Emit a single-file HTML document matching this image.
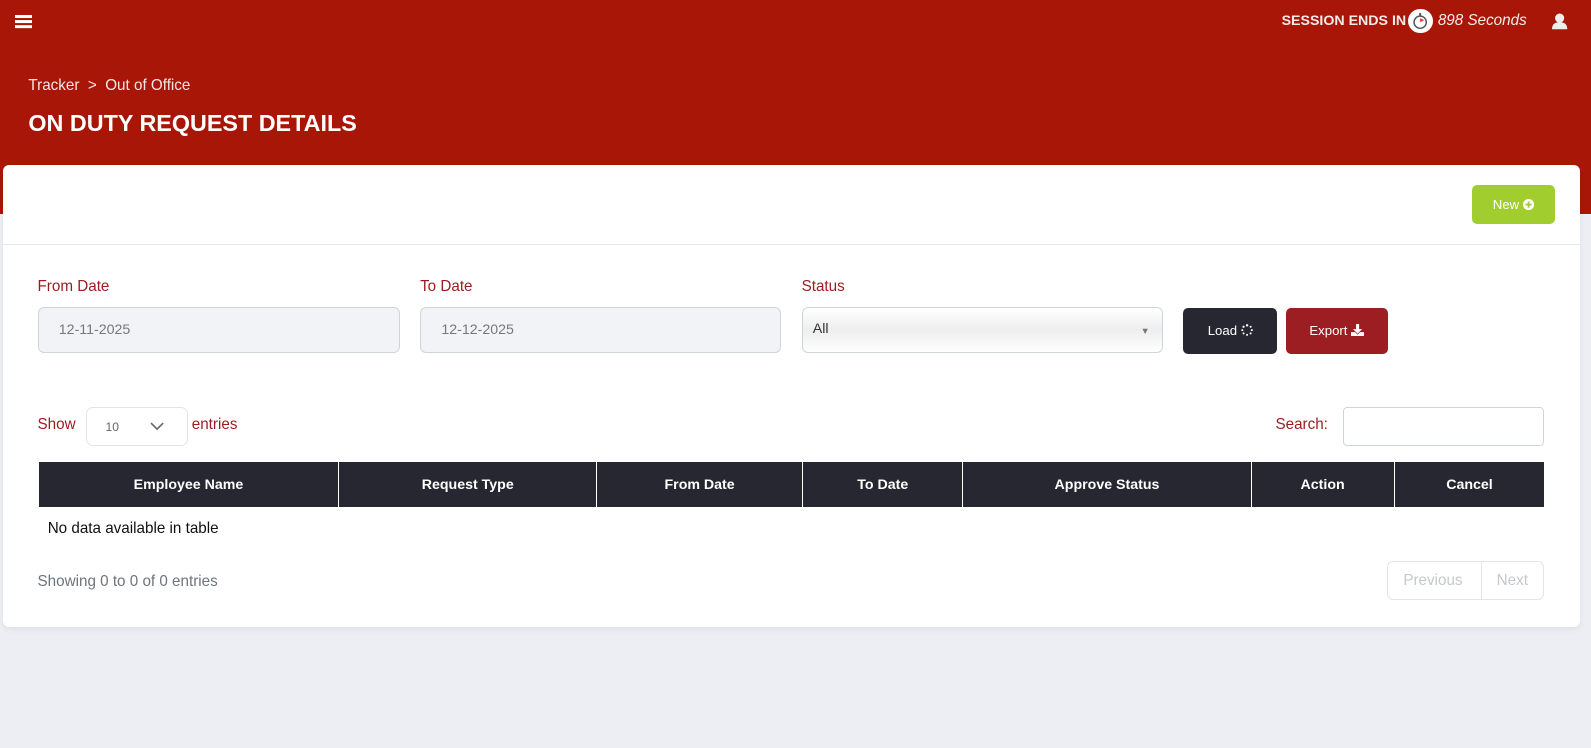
<!DOCTYPE html>
<html><head><meta charset="utf-8"><style>
*{box-sizing:border-box;margin:0;padding:0}
body{width:1591px;height:748px;background:#eceef4;font-family:"Liberation Sans",sans-serif;position:relative;overflow:hidden}
#w{zoom:1.0147;position:relative;width:1568px;height:737px}
.hdr{position:absolute;left:0;top:0;width:1568px;height:211px;background:#a81607}
.abs{position:absolute}
.card{position:absolute;left:3px;top:163px;width:1554px;height:455px;background:#fff;border-radius:6px;box-shadow:0 2px 6px rgba(0,0,0,.06)}
.lbl{position:absolute;color:#9b1c1f;font-size:15px}
.inp{position:absolute;height:45px;border:1px solid #cfd4dc;border-radius:6px;background:#f1f3f7;color:#777;font-size:14px;padding:13px 20px}
.btn{position:absolute;border-radius:5px;color:#fff;font-size:13px;text-align:center}
table{position:absolute;left:38px;top:455px;width:1484px;border-collapse:collapse}
th{background:#262730;color:#fff;font-size:14px;font-weight:bold;height:45px;border-left:1px solid #fff}
th:first-child{border-left:none}
</style></head><body><div id="w">
<div class="hdr"></div>
<div class="abs" style="left:15px;top:15px;width:17px;height:3px;background:#fff;box-shadow:0 5px 0 #fff,0 10px 0 #fff"></div>
<div class="abs" style="left:1263px;top:13px;color:#f4eaea;font-size:14px;font-weight:bold">SESSION ENDS IN</div>
<div class="abs" style="left:1388px;top:9px;width:24px;height:24px;border-radius:50%;background:#fff"><svg width="24" height="24"><circle cx="12" cy="13" r="6" fill="none" stroke="#555" stroke-width="1.5"/><path d="M12 13L16 11L12 9Z" fill="#e33"/><rect x="11" y="4" width="2" height="3" fill="#555"/></svg></div>
<div class="abs" style="left:1417px;top:12px;color:#f4eaea;font-size:15px;font-style:italic">898 Seconds</div>
<svg class="abs" style="left:1529px;top:12px" width="17" height="18"><circle cx="8.5" cy="6" r="4.5" fill="#eee"/><path d="M1 17Q1 10 8.5 10Q16 10 16 17Z" fill="#eee"/></svg>
<div class="abs" style="left:28px;top:76px;color:#f4e6e6;font-size:15px">Tracker &nbsp;&gt;&nbsp; Out of Office</div>
<div class="abs" style="left:28px;top:108px;color:#fff;font-size:23px;font-weight:bold;letter-spacing:0">ON DUTY REQUEST DETAILS</div>
<div class="card">
<div class="btn" style="left:1448px;top:19px;width:81px;height:39px;background:#a2cd2f;line-height:39px">New <svg width="11" height="11" style="vertical-align:-1px"><circle cx="5.5" cy="5.5" r="5.5" fill="#fff"/><path d="M5.5 2.5v6M2.5 5.5h6" stroke="#a2cd2f" stroke-width="1.8"/></svg></div>
<div class="abs" style="left:0;top:77px;width:1554px;height:1px;background:#e6e8ec"></div>
<div class="lbl" style="left:34px;top:111px">From Date</div>
<div class="lbl" style="left:411px;top:111px">To Date</div>
<div class="lbl" style="left:787px;top:111px">Status</div>
<div class="inp" style="left:34px;top:140px;width:357px">12-11-2025</div>
<div class="inp" style="left:411px;top:140px;width:356px">12-12-2025</div>
<div class="inp" style="left:787px;top:140px;width:356px;background:linear-gradient(#fff,#eee 50%,#fff);color:#333;padding:12px 10px">All<span style="position:absolute;right:12px;top:17px;font-size:9px;color:#777">▼</span></div>
<div class="btn" style="left:1163px;top:141px;width:93px;height:45px;background:#262730;line-height:45px">Load <svg width="12" height="12" style="vertical-align:-1px"><g fill="#fff"><circle cx="6" cy="1.3" r="1.2"/><circle cx="9.5" cy="2.7" r="1"/><circle cx="10.7" cy="6" r="1"/><circle cx="9.5" cy="9.3" r="1"/><circle cx="6" cy="10.7" r="1"/><circle cx="2.5" cy="9.3" r="1"/><circle cx="1.3" cy="6" r="1"/><circle cx="2.5" cy="2.7" r="1.1"/></g></svg></div>
<div class="btn" style="left:1264px;top:141px;width:101px;height:45px;background:#9c1e22;line-height:45px">Export <svg width="13" height="12" style="vertical-align:-1px"><path d="M5 0h3v5h3L6.5 9.5 2 5h3z M0 8h4l2.5 2.5L9 8h4v4H0z" fill="#fff"/></svg></div>
<div class="lbl" style="left:34px;top:247px">Show</div>
<div class="abs" style="left:82px;top:238px;width:100px;height:39px;border:1px solid #e3e5ea;border-radius:7px;font-size:12px;color:#666;padding:12px 18px">10<svg style="position:absolute;left:62px;top:14px" width="14" height="9"><path d="M1 1L7 7L13 1" fill="none" stroke="#666" stroke-width="1.6"/></svg></div>
<div class="lbl" style="left:186px;top:247px">entries</div>
<div class="lbl" style="left:1254px;top:247px">Search:</div>
<div class="abs" style="left:1321px;top:238px;width:198px;height:39px;border:1px solid #cfd4dc;border-radius:4px"></div>
</div>
<table><tr><th style="width:296px">Employee Name</th><th style="width:254px">Request Type</th><th style="width:203px">From Date</th><th style="width:158px">To Date</th><th style="width:284px">Approve Status</th><th style="width:141px">Action</th><th>Cancel</th></tr></table>
<div class="abs" style="left:47px;top:512px;font-size:15px;color:#111">No data available in table</div>
<div class="abs" style="left:37px;top:565px;font-size:15px;color:#6c757d">Showing 0 to 0 of 0 entries</div>
<div class="abs" style="left:1367px;top:553px;width:155px;height:38px;border:1px solid #e3e5ea;border-radius:6px;font-size:15px;color:#c5c8cc">
<span class="abs" style="left:15px;top:10px">Previous</span><div class="abs" style="left:92px;top:0;width:1px;height:36px;background:#e3e5ea"></div><span class="abs" style="left:107px;top:10px">Next</span></div>
</div></body></html>
